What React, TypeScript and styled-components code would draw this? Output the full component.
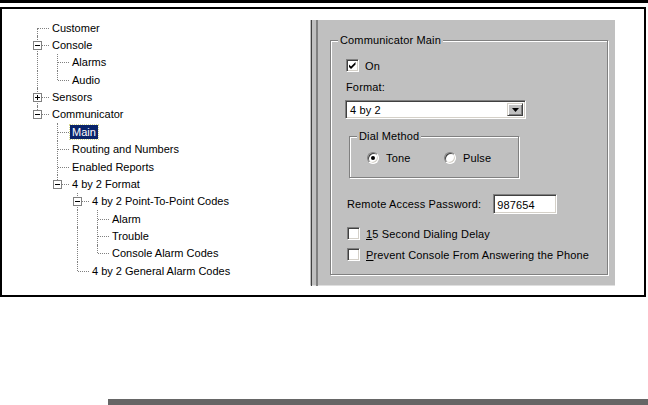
import React from "react";
import styled, { createGlobalStyle } from "styled-components";

const GlobalStyle = createGlobalStyle`
  html, body {
    margin: 0;
    padding: 0;
    background: #fff;
  }
  body {
    font-family: "Liberation Sans", Arial, sans-serif;
    font-size: 11px;
    color: #000;
  }
`;

type TreeNode = {
  label: string;
  open?: boolean;
  collapsed?: boolean;
  selected?: boolean;
  children?: TreeNode[];
};

type Row = {
  label: string;
  guides: boolean[];
  up: boolean;
  down: boolean;
  expander?: "plus" | "minus";
  selected?: boolean;
};

const tree: TreeNode[] = [
  { label: "Customer" },
  { label: "Console", open: true, children: [{ label: "Alarms" }, { label: "Audio" }] },
  { label: "Sensors", collapsed: true },
  {
    label: "Communicator",
    open: true,
    children: [
      { label: "Main", selected: true },
      { label: "Routing and Numbers" },
      { label: "Enabled Reports" },
      {
        label: "4 by 2 Format",
        open: true,
        children: [
          {
            label: "4 by 2 Point-To-Point Codes",
            open: true,
            children: [{ label: "Alarm" }, { label: "Trouble" }, { label: "Console Alarm Codes" }],
          },
          { label: "4 by 2 General Alarm Codes" },
        ],
      },
    ],
  },
];

// walk the tree, remembering which ancestor lines keep going down
const flatten = (nodes: TreeNode[], level: number, guides: boolean[], out: Row[]) => {
  nodes.forEach((n, i) => {
    const last = i === nodes.length - 1;
    const first = level === 0 && i === 0;
    out.push({
      label: n.label,
      guides,
      up: !first,
      down: !last,
      expander: n.collapsed ? "plus" : n.children ? "minus" : undefined,
      selected: n.selected,
    });
    if (n.children && n.open) flatten(n.children, level + 1, [...guides, !last], out);
  });
  return out;
};

const rows = flatten(tree, 0, [], []);

const Expander = ({ kind }: { kind: "plus" | "minus" }) => (
  <ExpanderIcon width="9" height="9" viewBox="0 0 9 9">
    <rect x="0.5" y="0.5" width="8" height="8" fill="#fff" stroke="#808080" />
    <path d="M2 4.5h5" stroke="#000" />
    {kind === "plus" && <path d="M4.5 2v5" stroke="#000" />}
  </ExpanderIcon>
);

const Check = ({ checked }: { checked?: boolean }) => (
  <CheckBox>
    {checked && (
      <svg width="9" height="9" viewBox="0 0 9 9">
        <path d="M1 3.5l2 2 4.5-4.5v2.5L3 8l-2-2z" fill="#000" />
      </svg>
    )}
  </CheckBox>
);

const App = () => {
  return (
    <Page>
      <GlobalStyle />
      <TopRule />
      <Frame>
        <Tree>
          {rows.map((row) => (
            <TreeRow key={row.label}>
              {row.guides.map((g, i) => (
                <Guide key={i} $up={g} $down={g} />
              ))}
              <Guide $up={row.up} $down={row.down} $branch>
                {row.expander && <Expander kind={row.expander} />}
              </Guide>
              <NodeLabel $selected={row.selected}>{row.label}</NodeLabel>
            </TreeRow>
          ))}
        </Tree>

        <Panel>
          <Splitter />
          <Group>
            <Legend>Communicator Main</Legend>
            <GroupBody>
              <CheckRow $top={12} $shift={0}>
                <Check checked />
                <span>On</span>
              </CheckRow>
              <FieldLabel>Format:</FieldLabel>
              <Combo>
                <ComboText>4 by 2</ComboText>
                <DropButton>
                  <svg width="7" height="4" viewBox="0 0 7 4">
                    <path d="M0 0h7L3.5 4z" fill="#000" />
                  </svg>
                </DropButton>
              </Combo>
              <DialGroup>
                <Legend>Dial Method</Legend>
                <RadioRow>
                  <RadioOption $width={77}>
                    <Radio $on />
                    <span>Tone</span>
                  </RadioOption>
                  <RadioOption>
                    <Radio />
                    <span>Pulse</span>
                  </RadioOption>
                </RadioRow>
              </DialGroup>
              <PasswordRow>
                <span>Remote Access Password:</span>
                <TextBox>987654</TextBox>
              </PasswordRow>
              <CheckRow $top={13} $shift={1}>
                <Check />
                <span>
                  <u>1</u>5 Second Dialing Delay
                </span>
              </CheckRow>
              <CheckRow $top={8} $shift={1}>
                <Check />
                <span>
                  <u>P</u>revent Console From Answering the Phone
                </span>
              </CheckRow>
            </GroupBody>
          </Group>
        </Panel>
      </Frame>
      <BottomRule />
    </Page>
  );
};

export default App;

const Page = styled.div`
  width: 648px;
  height: 405px;
  overflow: hidden;
  display: flex;
  flex-direction: column;
`;

const TopRule = styled.div`
  height: 3px;
  background: #000;
`;

const Frame = styled.div`
  box-sizing: border-box;
  margin-top: 4px;
  width: 646px;
  height: 290px;
  border: 2px solid #000;
  display: flex;
`;

const BottomRule = styled.div`
  margin: 102px 0 0 108px;
  height: 6px;
  background: #666;
`;

const Tree = styled.div`
  width: 308px;
  box-sizing: border-box;
  padding: 10px 0 0 25px;
  display: flex;
  flex-direction: column;
`;

const TreeRow = styled.div`
  display: flex;
  align-items: center;
  height: 17.36px;
`;

const Guide = styled.span<{ $up: boolean; $down: boolean; $branch?: boolean }>`
  position: relative;
  flex: none;
  width: 20px;
  align-self: stretch;

  &::before {
    content: "";
    display: ${(p) => (p.$up || p.$down ? "block" : "none")};
    position: absolute;
    left: 10px;
    top: ${(p) => (p.$up ? "0" : "50%")};
    bottom: ${(p) => (p.$down ? "0" : "50%")};
    border-left: 1px dotted #808080;
  }

  &::after {
    content: "";
    display: ${(p) => (p.$branch ? "block" : "none")};
    position: absolute;
    left: 11px;
    top: 50%;
    width: 11px;
    border-top: 1px dotted #808080;
  }
`;

const ExpanderIcon = styled.svg`
  position: absolute;
  z-index: 1;
  left: 6px;
  top: calc(50% - 4px);
`;

const NodeLabel = styled.span<{ $selected?: boolean }>`
  margin-left: 3px;
  padding: 0 2px;
  line-height: 14px;
  white-space: nowrap;
  background: ${(p) => (p.$selected ? "#0a246a" : "transparent")};
  color: ${(p) => (p.$selected ? "#fff" : "#000")};
  outline: ${(p) => (p.$selected ? "1px dotted #d8d890" : "none")};
`;

const Panel = styled.div`
  width: 305px;
  margin: 11px 29px 9px 0;
  background: #c0c0c0;
  display: flex;
  letter-spacing: 0.15px;
  box-shadow: inset 0 -1px 0 #dfdfdf;
`;

const Splitter = styled.div`
  box-sizing: border-box;
  width: 7px;
  margin-left: 1px;
  border-left: 1px solid #404040;
  border-right: 2px solid #808080;
`;

const Group = styled.fieldset`
  flex: 1;
  min-width: 0;
  margin: 13px 7px 11px 12px;
  padding: 0;
  border: 1px solid #808080;
  box-shadow: inset 1px 1px 0 #fff, 1px 1px 0 #fff;
`;

const Legend = styled.legend`
  margin-left: 7px;
  padding: 0 2px;
  line-height: 14px;
  background: #c0c0c0;
`;

const GroupBody = styled.div`
  padding: 0 0 0 15px;
  display: flex;
  flex-direction: column;
  align-items: flex-start;
`;

const CheckRow = styled.div<{ $top: number; $shift: number }>`
  display: flex;
  align-items: center;
  gap: 6px;
  margin-top: ${(p) => p.$top}px;
  margin-left: ${(p) => p.$shift}px;
  height: 13px;
  line-height: 14px;
`;

const CheckBox = styled.span`
  box-sizing: border-box;
  width: 13px;
  height: 13px;
  flex: none;
  background: #fff;
  border: 1px solid;
  border-color: #808080 #fff #fff #808080;
  box-shadow: inset 1px 1px 0 #404040, inset -1px -1px 0 #d4d0c8;
  display: flex;
  align-items: center;
  justify-content: center;
`;

const FieldLabel = styled.div`
  margin-top: 8px;
  line-height: 14px;
`;

const sunken = `
  box-sizing: border-box;
  background: #fff;
  border: 1px solid;
  border-color: #808080 #fff #fff #808080;
  box-shadow: inset 1px 1px 0 #404040, inset -1px -1px 0 #d4d0c8;
`;

const Combo = styled.div`
  ${sunken}
  margin: 6px 0 0 -1px;
  width: 181px;
  height: 19px;
  padding: 2px;
  display: flex;
  align-items: stretch;
`;

const ComboText = styled.span`
  flex: 1;
  padding-left: 2px;
  line-height: 15px;
`;

const DropButton = styled.span`
  box-sizing: border-box;
  width: 16px;
  background: #c0c0c0;
  border: 1px solid;
  border-color: #d4d0c8 #404040 #404040 #d4d0c8;
  box-shadow: inset 1px 1px 0 #fff, inset -1px -1px 0 #808080;
  display: flex;
  align-items: center;
  justify-content: center;
`;

const DialGroup = styled.fieldset`
  margin: 10px 0 0 3px;
  padding: 0 0 13px 17px;
  width: 170px;
  box-sizing: border-box;
  border: 1px solid #808080;
  box-shadow: inset 1px 1px 0 #fff, 1px 1px 0 #fff;

  & > legend {
    margin-left: -10px;
  }
`;

const RadioRow = styled.div`
  display: flex;
  margin-top: 9px;
  height: 12px;
  align-items: center;
`;

const RadioOption = styled.label<{ $width?: number }>`
  display: flex;
  align-items: center;
  gap: 7px;
  width: ${(p) => (p.$width ? `${p.$width}px` : "auto")};
  line-height: 14px;
`;

const Radio = styled.span<{ $on?: boolean }>`
  box-sizing: border-box;
  width: 12px;
  height: 12px;
  flex: none;
  border-radius: 50%;
  background: #fff;
  border: 1px solid;
  border-color: #808080 #fff #fff #808080;
  box-shadow: inset 1px 1px 0 #404040, inset -1px -1px 0 #d4d0c8;
  display: flex;
  align-items: center;
  justify-content: center;

  &::after {
    content: "";
    display: ${(p) => (p.$on ? "block" : "none")};
    width: 4px;
    height: 4px;
    border-radius: 50%;
    background: #000;
  }
`;

const PasswordRow = styled.div`
  display: flex;
  align-items: center;
  gap: 12px;
  margin: 16px 0 0 1px;
  line-height: 14px;
`;

const TextBox = styled.span`
  ${sunken}
  width: 64px;
  height: 20px;
  padding: 2px 3px;
  line-height: 16px;
`;
